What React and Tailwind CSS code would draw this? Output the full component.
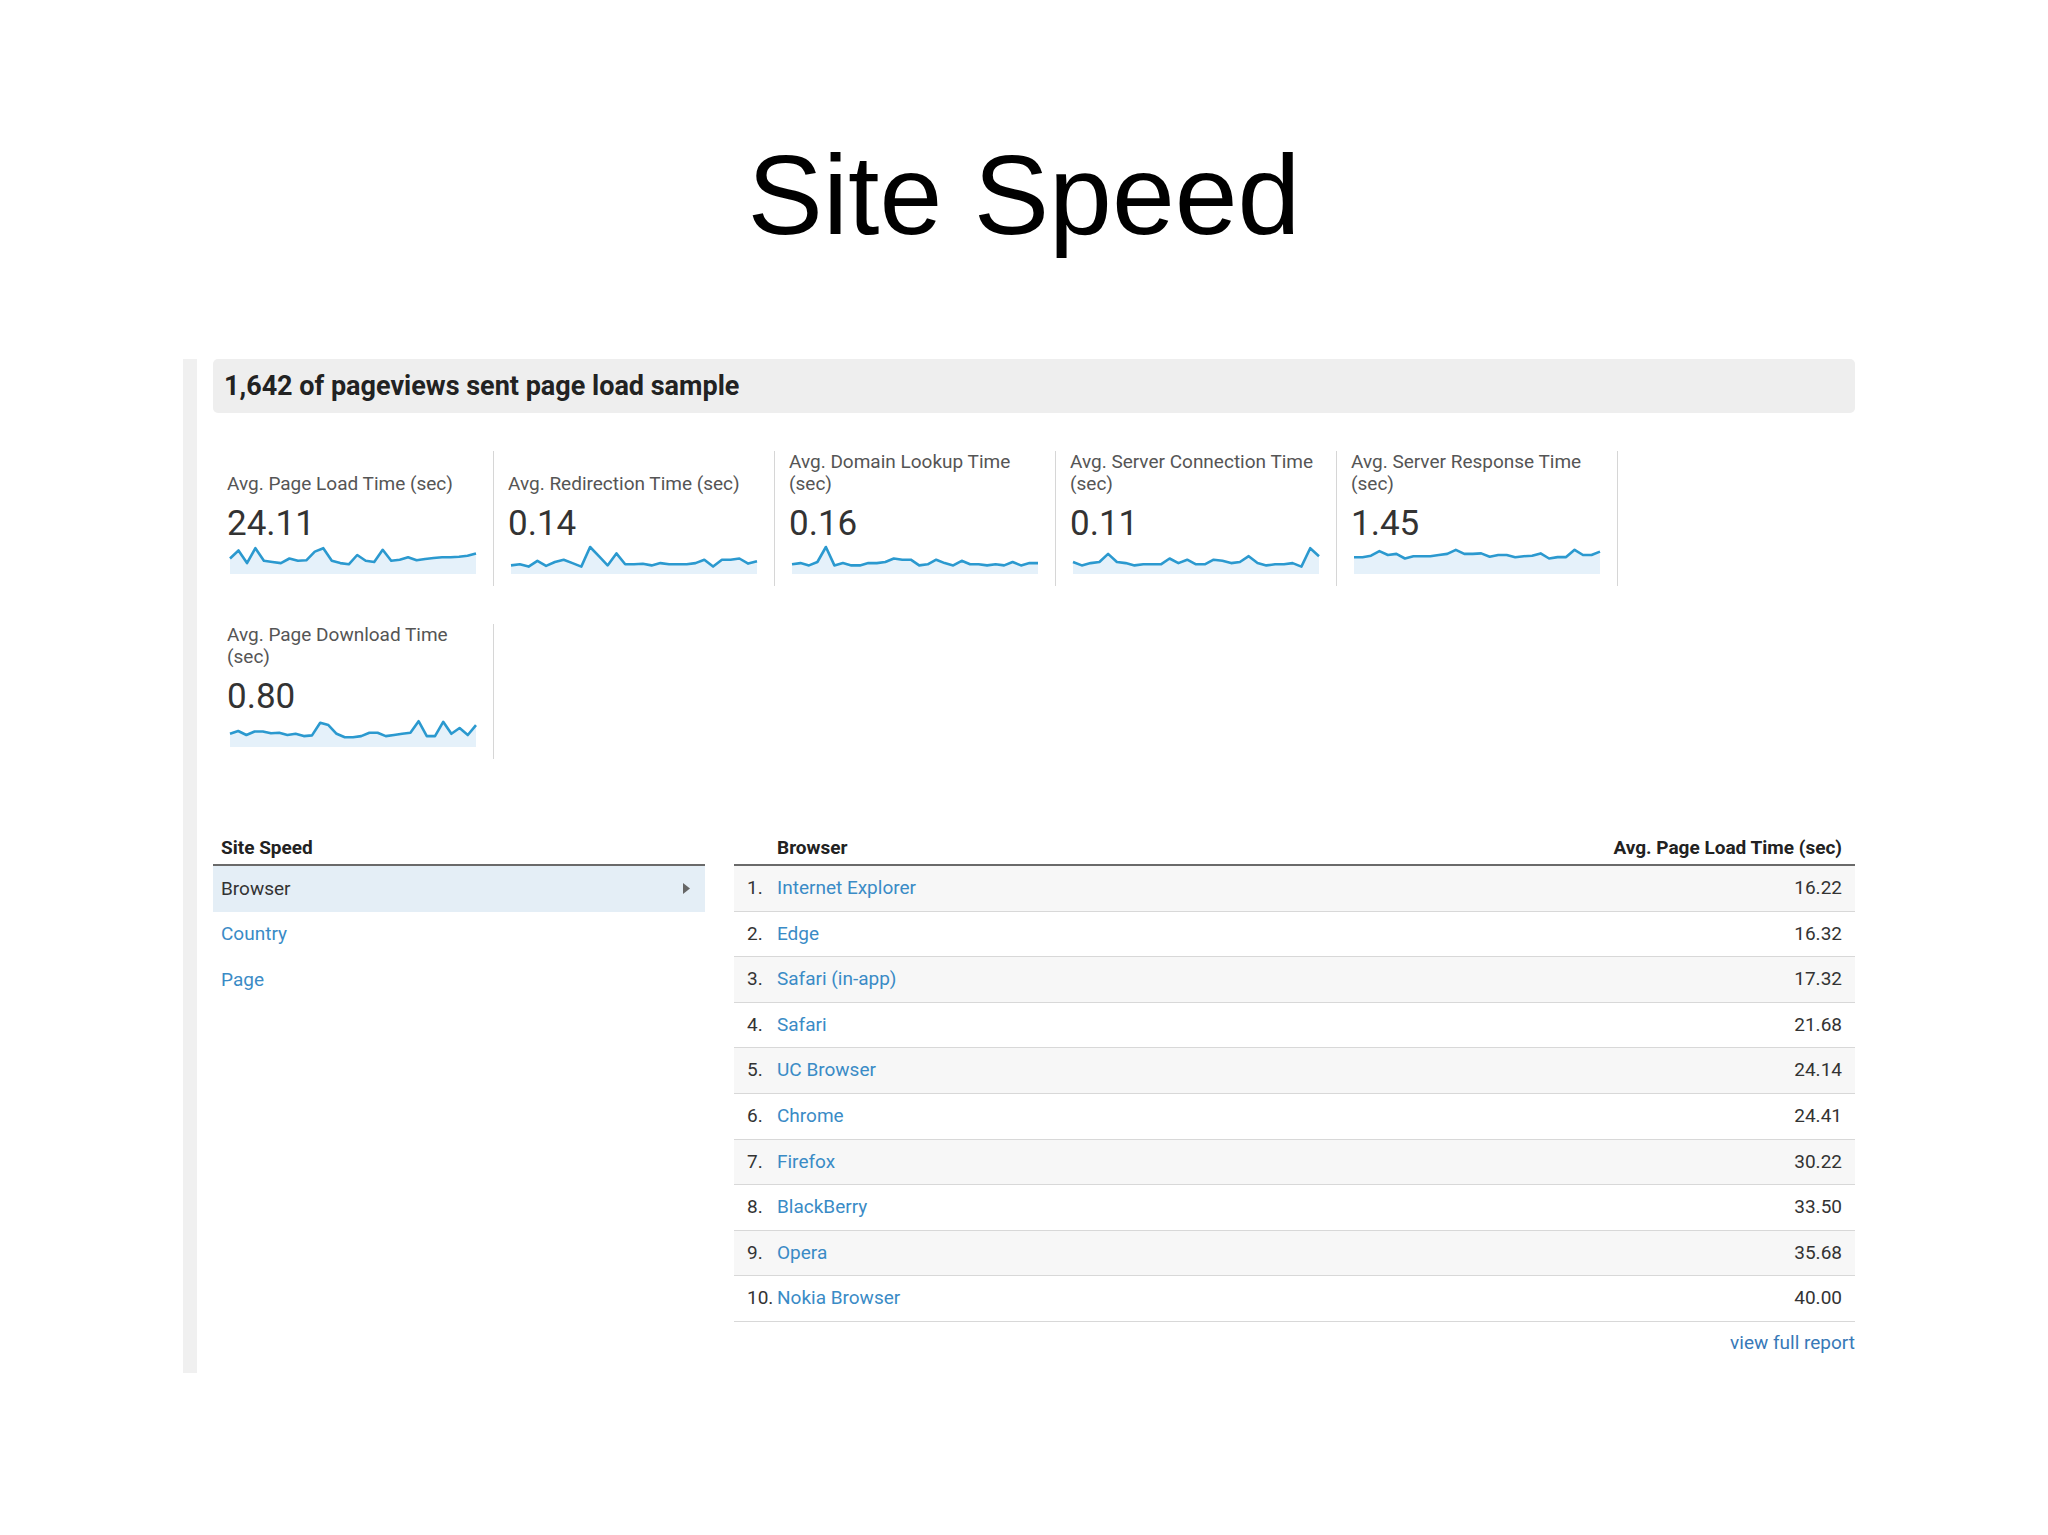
import React from "react";

const tiles = [
  {
    label: "Avg. Page Load Time (sec)",
    value: "24.11",
    data: [0.5, 0.85, 0.3, 0.95, 0.4, 0.35, 0.3, 0.5, 0.4, 0.42, 0.8, 0.95, 0.4, 0.3, 0.25, 0.65, 0.4, 0.35, 0.88, 0.4, 0.45, 0.55, 0.42, 0.48, 0.52, 0.55, 0.55, 0.58, 0.62, 0.72],
  },
  {
    label: "Avg. Redirection Time (sec)",
    value: "0.14",
    data: [0.2, 0.25, 0.15, 0.4, 0.18, 0.35, 0.45, 0.3, 0.15, 1.0, 0.6, 0.2, 0.72, 0.25, 0.25, 0.27, 0.2, 0.3, 0.25, 0.25, 0.25, 0.3, 0.45, 0.15, 0.45, 0.45, 0.5, 0.28, 0.38],
  },
  {
    label: "Avg. Domain Lookup Time (sec)",
    value: "0.16",
    data: [0.25, 0.3, 0.2, 0.35, 1.0, 0.2, 0.3, 0.2, 0.2, 0.3, 0.3, 0.35, 0.5, 0.45, 0.45, 0.2, 0.25, 0.45, 0.3, 0.2, 0.4, 0.25, 0.25, 0.2, 0.25, 0.2, 0.35, 0.2, 0.3, 0.3],
  },
  {
    label: "Avg. Server Connection Time (sec)",
    value: "0.11",
    data: [0.35, 0.2, 0.3, 0.35, 0.7, 0.35, 0.3, 0.2, 0.25, 0.25, 0.25, 0.5, 0.3, 0.45, 0.25, 0.25, 0.45, 0.4, 0.3, 0.35, 0.6, 0.3, 0.2, 0.25, 0.25, 0.3, 0.15, 0.95, 0.6],
  },
  {
    label: "Avg. Server Response Time (sec)",
    value: "1.45",
    data: [0.55, 0.55, 0.62, 0.82, 0.65, 0.7, 0.5, 0.6, 0.6, 0.6, 0.65, 0.7, 0.88, 0.7, 0.7, 0.72, 0.58, 0.65, 0.65, 0.55, 0.6, 0.62, 0.72, 0.5, 0.56, 0.56, 0.88, 0.65, 0.65, 0.8],
  },
  {
    label: "Avg. Page Download Time (sec)",
    value: "0.80",
    data: [0.4, 0.52, 0.35, 0.5, 0.5, 0.42, 0.45, 0.35, 0.4, 0.3, 0.33, 0.88, 0.78, 0.4, 0.25, 0.25, 0.3, 0.45, 0.45, 0.3, 0.35, 0.4, 0.45, 0.95, 0.3, 0.3, 0.92, 0.4, 0.65, 0.35, 0.78],
  },
];

const browsers = [
  ["Internet Explorer", "16.22"],
  ["Edge", "16.32"],
  ["Safari (in-app)", "17.32"],
  ["Safari", "21.68"],
  ["UC Browser", "24.14"],
  ["Chrome", "24.41"],
  ["Firefox", "30.22"],
  ["BlackBerry", "33.50"],
  ["Opera", "35.68"],
  ["Nokia Browser", "40.00"],
];

function Spark({ data }) {
  const w = 252;
  const h = 30;
  const n = data.length;
  const pts = data.map((v, i) => [3 + (i * 246) / (n - 1), 3 + (1 - v) * 23]);
  const line = pts.map((p) => `${p[0].toFixed(1)},${p[1].toFixed(1)}`).join(" ");
  const area = `3,${h} ${line} 249,${h}`;
  return (
    <svg width={w} height={h} className="block">
      <polygon points={area} fill="#e5f1fa" />
      <polyline
        points={line}
        fill="none"
        stroke="#2b99cf"
        strokeWidth="2.6"
        strokeLinejoin="round"
      />
    </svg>
  );
}

function Tile({ t }) {
  return (
    <div className="w-[281px] h-[135px] border-r border-[#d6d6d6] pl-[14px] pr-[15px]">
      <div className="h-[44px] flex flex-col justify-end text-[19px] leading-[22px] text-[#555]">
        {t.label}
      </div>
      <div className="mt-[10px] h-[38px] text-[35px] leading-[38px] text-[#333]">{t.value}</div>
      <div className="mt-[1px]">
        <Spark data={t.data} />
      </div>
    </div>
  );
}

export default function App() {
  return (
    <div className="w-[2048px] h-[1535px] bg-white font-['Roboto',sans-serif] text-[#333] overflow-hidden">
      <h1 className="pt-[139px] text-center text-[113px] leading-[113px] font-normal text-black font-['Liberation_Sans',Arial,sans-serif]">
        Site Speed
      </h1>
      <div className="mt-[107px] ml-[183px] flex">
        <div className="w-[14px] h-[1014px] bg-[#f0f0f0]" />
        <div className="ml-[16px] w-[1642px]">
          <div className="h-[54px] rounded-[5px] bg-[#eeeeee] flex items-center px-[11px] text-[27px] font-bold text-[#222]">
            1,642 of pageviews sent page load sample
          </div>
          <div className="mt-[38px] grid grid-cols-[repeat(5,281px)] gap-y-[38px]">
            {tiles.map((t) => (
              <Tile key={t.label} t={t} />
            ))}
          </div>
          <div className="mt-[73px] flex gap-[29px]">
            <div className="w-[492px]">
              <div className="h-[34px] border-b-2 border-[#6a6a6a] flex items-center pl-[8px] text-[19px] font-bold text-[#222]">
                Site Speed
              </div>
              <div className="h-[45.6px] bg-[#e4eef6] flex items-center justify-between pl-[8px] pr-[15px] text-[19px] text-[#333]">
                <span>Browser</span>
                <svg width="7" height="11" viewBox="0 0 7 11">
                  <polygon points="0,0 7,5.5 0,11" fill="#666" />
                </svg>
              </div>
              <div className="h-[45.6px] flex items-center pl-[8px] text-[19px] text-[#3a8bc6]">Country</div>
              <div className="h-[45.6px] flex items-center pl-[8px] text-[19px] text-[#3a8bc6]">Page</div>
            </div>
            <div className="flex-1">
              <div className="h-[34px] border-b-2 border-[#6a6a6a] flex items-center justify-between pl-[43px] pr-[13px] text-[19px] font-bold text-[#222]">
                <span>Browser</span>
                <span>Avg. Page Load Time (sec)</span>
              </div>
              {browsers.map(([name, val], i) => (
                <div
                  key={name}
                  className={`h-[45.6px] border-b border-[#d8d8d8] flex items-center pl-[13px] pr-[13px] text-[19px] ${
                    i % 2 === 0 ? "bg-[#f7f7f7]" : "bg-white"
                  }`}
                >
                  <span className="w-[30px] text-[#333]">{i + 1}.</span>
                  <span className="flex-1 text-[#3a8bc6]">{name}</span>
                  <span className="text-[#333]">{val}</span>
                </div>
              ))}
              <div className="mt-[9px] text-right text-[19px] leading-[24px] text-[#3879b8]">view full report</div>
            </div>
          </div>
        </div>
      </div>
    </div>
  );
}
